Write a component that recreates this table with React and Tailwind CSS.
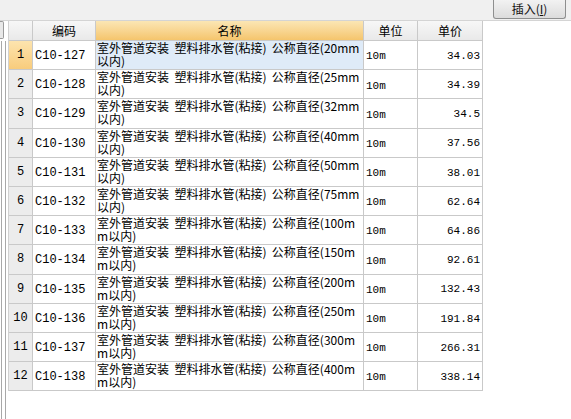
import React from "react";

const rows = [
  ["C10-127", "20mm", "", "34.03"],
  ["C10-128", "25mm", "", "34.39"],
  ["C10-129", "32mm", "", "34.5"],
  ["C10-130", "40mm", "", "37.56"],
  ["C10-131", "50mm", "", "38.01"],
  ["C10-132", "75mm", "", "62.64"],
  ["C10-133", "100m", "m", "64.86"],
  ["C10-134", "150m", "m", "92.61"],
  ["C10-135", "200m", "m", "132.43"],
  ["C10-136", "250m", "m", "191.84"],
  ["C10-137", "300m", "m", "266.31"],
  ["C10-138", "400m", "m", "338.14"],
];

const cjk = "font-['Noto_Sans_CJK_SC',sans-serif]";
const mono = "font-['Liberation_Mono','Noto_Sans_CJK_SC',monospace]";
const cols = "grid grid-cols-[24px_63px_268px_54px_65px]";

const App = () => {
  return (
    <div className={`w-[571px] h-[419px] overflow-hidden bg-white text-black ${cjk}`}>
      {/* toolbar */}
      <div className="h-[21px] bg-[#f0f0f0] border-b border-[#d4d4d4] flex justify-end pr-[5px]">
        <button className="w-[73px] h-[19px] border border-t-0 border-[#8e8f8f] rounded-b-[3px] bg-gradient-to-b from-[#f2f2f2] to-[#dcdcdc] text-[12px] leading-[18px] text-[#111]">
          插入(<span className="underline">I</span>)
        </button>
      </div>

      <div className="flex h-[398px]">
        {/* left splitter */}
        <div className="w-[8px] flex flex-col">
          <div className="w-[4px] h-[18px] border border-l-0 border-[#9a9a9a] rounded-r-[2px] bg-[#e8e8e8]" />
          <div className="flex-1 flex gap-[3px] pl-[1px] pt-[2px]">
            <div className="w-px bg-[#a8a8a8]" />
            <div className="w-px bg-[#a8a8a8]" />
          </div>
        </div>

        {/* grid */}
        <div className="flex flex-col">
          <div className={`${cols} h-[20px] text-[12px] border-l border-[#d0d0d0]`}>
            <div className="bg-gradient-to-b from-[#f7f7f7] to-[#e9e9e9] border-r border-b border-[#c9c9c9]" />
            <div className="bg-gradient-to-b from-[#f7f7f7] to-[#e9e9e9] border-r border-b border-[#c9c9c9] flex items-center justify-center">编码</div>
            <div className="bg-gradient-to-b from-[#fbe6b4] to-[#f5c56c] border-r border-b border-[#c9c9c9] flex items-center justify-center">名称</div>
            <div className="bg-gradient-to-b from-[#f7f7f7] to-[#e9e9e9] border-r border-b border-[#c9c9c9] flex items-center justify-center">单位</div>
            <div className="bg-gradient-to-b from-[#f7f7f7] to-[#e9e9e9] border-r border-b border-[#c9c9c9] flex items-center justify-center">单价</div>
          </div>

          {rows.map(([code, size, tail, price], i) => {
            const active = i === 0;
            return (
              <div key={code} className={`${cols} h-[29.2px] border-l border-[#d0d0d0]`}>
                <div
                  className={`${active ? "bg-gradient-to-b from-[#fde4ae] to-[#f8cc7c]" : "bg-[#ececec]"} border-r border-b border-[#c9c9c9] flex items-center justify-center text-[12px] ${mono}`}
                >
                  {i + 1}
                </div>
                <div className={`border-r border-b border-[#c9c9c9] flex items-center pl-[2px] pt-[2px] text-[12px] ${mono}`}>
                  {code}
                </div>
                <div
                  className={`${active ? "bg-[#dfebf8]" : ""} border-r border-b border-[#c9c9c9] pl-[1px] text-[12px] leading-[13px] whitespace-nowrap`}
                >
                  <div>室外管道安装&nbsp; 塑料排水管(粘接)&nbsp; 公称直径({size}</div>
                  <div>{tail}以内)</div>
                </div>
                <div className={`border-r border-b border-[#c9c9c9] flex items-center pl-[2px] pt-[3px] text-[11px] ${mono}`}>
                  10m
                </div>
                <div className={`border-r border-b border-[#c9c9c9] flex items-center justify-end pr-[2px] pt-[2px] text-[11px] ${mono}`}>
                  {price}
                </div>
              </div>
            );
          })}
        </div>
      </div>
    </div>
  );
};

export default App;
